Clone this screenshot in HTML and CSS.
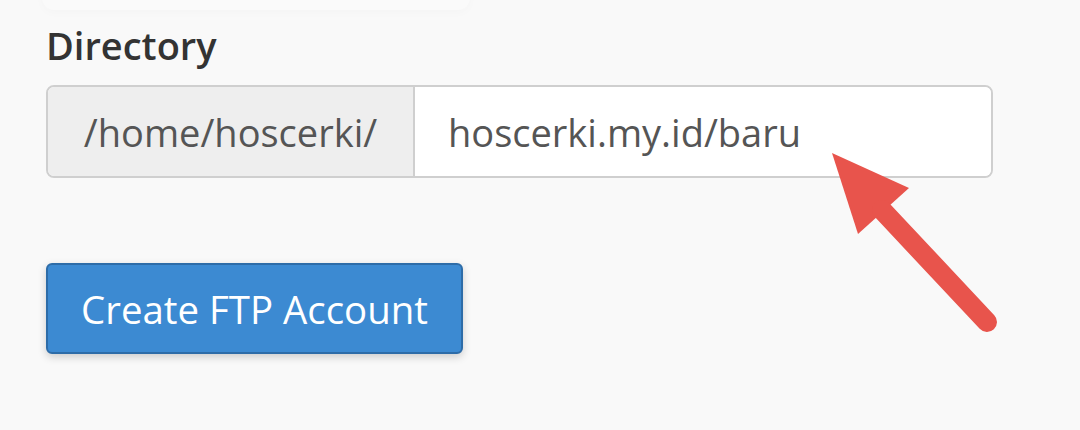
FILE: index.html
```html
<!DOCTYPE html>
<html>
<head>
<meta charset="utf-8">
<link rel="stylesheet" href="styles.css">
</head>
<body>
<div class="page">
  <div class="prev-box"></div>
  <form class="form">
    <label class="label" for="dir">Directory</label>
    <div class="input-group">
      <span class="addon">/home/hoscerki/</span>
      <input id="dir" class="input" type="text" value="hoscerki.my.id/baru">
    </div>
    <button type="button" class="btn">Create FTP Account</button>
  </form>
  <svg class="arrow" width="200" height="200" viewBox="0 0 200 200">
    <polygon points="12,3 89,38 38,84" fill="#e8544c"/>
    <line x1="62" y1="60" x2="167" y2="172" stroke="#e8544c" stroke-width="20" stroke-linecap="round"/>
  </svg>
</div>
</body>
</html>
```

FILE: styles.css
```css
* { box-sizing: border-box; }
html, body {
  margin: 0;
  padding: 0;
  background: #f9f9f9;
  font-family: "Open Sans", "Liberation Sans", sans-serif;
}
.page {
  position: relative;
  width: 1080px;
  height: 430px;
  overflow: hidden;
}
.prev-box {
  width: 428px;
  height: 40px;
  margin: -30px 0 0 42px;
  background: #fafafa;
  border-radius: 12px;
  box-shadow: 0 3px 10px rgba(0,0,0,0.02);
}
.form {
  display: flex;
  flex-direction: column;
  align-items: flex-start;
  padding-left: 46px;
}
.label {
  font-size: 38px;
  font-weight: 600;
  color: #333;
  line-height: 46px;
  margin-top: 12px;
}
.input-group {
  display: flex;
  width: 947px;
  height: 93px;
  margin-top: 17px;
  border: 2px solid #cfcfcf;
  border-radius: 8px;
  overflow: hidden;
  background: #fff;
}
.addon {
  display: flex;
  align-items: center;
  justify-content: center;
  width: 367px;
  background: #eee;
  border-right: 2px solid #cfcfcf;
  font-size: 38px;
  color: #555;
}
.input {
  flex: 1;
  border: 0;
  outline: none;
  background: #fff;
  padding: 0 0 0 33px;
  font-family: inherit;
  font-size: 38px;
  color: #555;
}
.btn {
  margin-top: 85px;
  width: 417px;
  height: 91px;
  background: #3c8ad2;
  border: 2px solid #2d6ca8;
  border-radius: 6px;
  color: #fff;
  font-family: inherit;
  font-size: 38.4px;
  white-space: nowrap;
  padding: 0;
  box-shadow: 0 3px 8px rgba(0,0,0,0.18);
}
.arrow {
  position: absolute;
  left: 820px;
  top: 150px;
}
```
